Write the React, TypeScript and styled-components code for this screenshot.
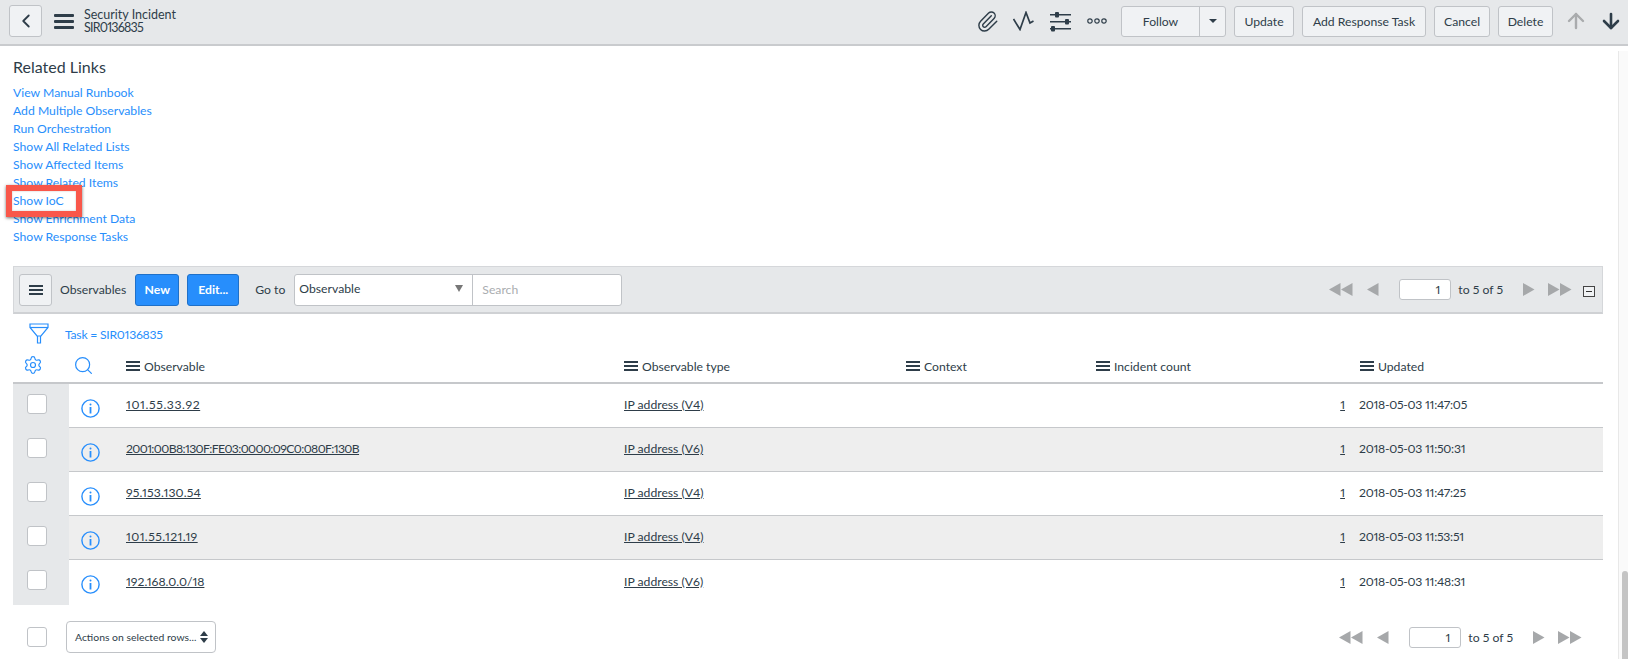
import React from 'react';
import styled, { createGlobalStyle } from 'styled-components';
import { Paperclip, ChevronLeft, ArrowUp, ArrowDown, Search as SearchIcon, Settings } from 'lucide-react';

const Global = createGlobalStyle`
  html, body { margin: 0; padding: 0; height: 659px; overflow: hidden; background: #fff; }
  body { font-family: Lato, "Noto Sans", sans-serif; font-size: 12.2px; color: #2e3d49; font-variant-numeric: proportional-nums; }
  * { box-sizing: border-box; }
`;

const Page = styled.div`display: flex; flex-direction: column; width: 1628px; height: 659px; overflow: hidden;`;
const Header = styled.header`
  flex: none; height: 46px; background: #e6e8ea; border-bottom: 2px solid #c9cbce;
  display: flex; align-items: center; padding: 0 5px 2px 9px;
`;
const Body = styled.div`flex: 1; display: flex; min-height: 0;`;
const Main = styled.main`flex: 1; min-width: 0; padding: 11px 15px 0 13px;`;
const Track = styled.div`
  flex: none; width: 10px; margin-top: 5px; border-left: 1px solid #e8e8e8; background: #fafafa;
  display: flex; flex-direction: column; justify-content: flex-end; padding-left: 3px;
`;
const Thumb = styled.div`width: 6px; height: 88px; background: #c4c4c4; border-radius: 3px 3px 0 0;`;

const BaseButton = styled.button`
  font: inherit; font-size: 12.2px; color: #2e3d49; background: #f0f2f4; border: 1px solid #c0c3c7;
  border-radius: 3px; height: 31px; padding: 0; display: inline-flex; align-items: center; justify-content: center;
`;
const BackButton = styled(BaseButton)`width: 33px; height: 32px;`;
const TitleBlock = styled.div`margin-left: 10px; font-size: 12.5px; line-height: 13.5px;`;
const TitleNumber = styled.div`letter-spacing: -0.8px;`;
const BigBars = styled.svg`margin-left: 12px; flex: none;`;
const Spacer = styled.div`flex: 1;`;
const IconSlot = styled.span<{ $w: number; $gap?: number }>`
  display: inline-flex; align-items: center; justify-content: center; width: ${p => p.$w}px; margin-right: ${p => p.$gap ?? 0}px; color: #2e3d49;
`;
const ActionButton = styled(BaseButton)<{ $w: number; $gap?: number }>`width: ${p => p.$w}px; margin-right: ${p => p.$gap ?? 8}px;`;
const SplitButton = styled.div`
  display: flex; width: 105px; height: 31px; margin-right: 8px; background: #f0f2f4; border: 1px solid #c0c3c7; border-radius: 3px;
`;
const SplitMain = styled.span`flex: 1; display: flex; align-items: center; justify-content: center; border-right: 1px solid #c0c3c7;`;
const SplitCaret = styled.span`width: 25px; display: flex; align-items: center; justify-content: center;`;
const Caret = styled.i`width: 0; height: 0; border-left: 4px solid transparent; border-right: 4px solid transparent; border-top: 4px solid #2e3d49;`;

const Heading = styled.h2`margin: 0 0 7px; font-size: 16px; font-weight: 400; line-height: 20px;`;
const Links = styled.div`position: relative; display: flex; flex-direction: column; align-items: flex-start; margin-bottom: 20px;`;
const LinkText = styled.a`color: #278efc; font-size: 12.2px; line-height: 18px; text-decoration: none;`;
const Callout = styled.div`
  position: absolute; left: -7px; top: 101px; width: 76px; height: 32px; border: 6px solid #f9574a;
  box-shadow: 0 1px 3px rgba(0,0,0,.55), inset 0 0 2px rgba(0,0,0,.25);
`;

const Toolbar = styled.div`
  height: 48px; background: #e6e8ea; border: 1px solid #d5d7da; border-bottom: 2px solid #cfd1d4;
  display: flex; align-items: center; padding: 0 7px 0 5px;
`;
const MenuButton = styled(BaseButton)`width: 33px; height: 32px;`;
const ToolLabel = styled.span<{ $l: number }>`margin-left: ${p => p.$l}px;`;
const PrimaryButton = styled.button<{ $w: number; $l: number }>`
  font: inherit; font-weight: 700; font-size: 12.2px; color: #fff; background: #278efc; border: 1px solid #1f70c8; border-radius: 3px;
  width: ${p => p.$w}px; height: 32px; margin-left: ${p => p.$l}px; padding: 0;
`;
const SearchGroup = styled.div`
  display: flex; width: 328px; height: 32px; margin-left: 9px; background: #fff; border: 1px solid #c0c3c7; border-radius: 3px;
`;
const SelectPart = styled.div`
  width: 178px; display: flex; align-items: center; justify-content: space-between; padding: 0 9px 2px 4px; border-right: 1px solid #c0c3c7;
`;
const Tri = styled.i`
  width: 0; height: 0; border-left: 4px solid transparent; border-right: 4px solid transparent; border-top: 7px solid #777;
`;
const SearchPart = styled.span`flex: 1; display: flex; align-items: center; padding-left: 9px; color: #aaadb0;`;

const Pager = styled.div<{ $mr: number }>`display: flex; align-items: center; margin-left: auto; margin-right: ${p => p.$mr}px;`;
const PageInput = styled.div`
  width: 52px; height: 21px; margin: 0 7px 0 20px; padding-right: 10px; background: #fff; border: 1px solid #c0c3c7; border-radius: 3px;
  display: flex; align-items: center; justify-content: flex-end;
`;
const PagerGap = styled.span<{ $l: number }>`display: inline-flex; margin-left: ${p => p.$l}px;`;
const Collapse = styled.span`
  width: 12px; height: 11px; margin-left: 11px; margin-top: 3px; border: 1px solid #444; background: #f0f2f4; display: flex; align-items: center; justify-content: center;
  &::after { content: ''; width: 6px; height: 1px; background: #333; }
`;

const FilterRow = styled.div`height: 40px; display: flex; align-items: center; padding: 0 0 2px 16px;`;
const FilterText = styled.a`color: #278efc; margin-left: 16px; font-size: 12.2px; padding-top: 3px; letter-spacing: -0.25px;`;

const cols = '56px 57px 498px 282px 190px 257px 1fr';
const HeadRow = styled.div`
  display: grid; grid-template-columns: ${cols}; height: 30px; align-items: center; border-bottom: 2px solid #c6c8cb;
`;
const HeadCell = styled.div<{ $pl?: number }>`display: flex; align-items: center; gap: 4px; padding-bottom: 4px; padding-left: ${p => p.$pl ?? 0}px;`;
const IconCell = styled.div<{ $pl: number }>`padding-left: ${p => p.$pl}px; display: flex; padding-bottom: 6px; color: #278efc;`;
const Row = styled.div<{ $alt: boolean; $last: boolean }>`
  display: grid; grid-template-columns: ${cols}; height: 44px; align-items: center;
  background: ${p => (p.$alt ? '#eeeeee' : '#fff')};
  border-bottom: ${p => (p.$last ? 'none' : '1px solid #c6c8cb')};
`;
const CheckCell = styled.div`align-self: stretch; background: #e6e8ea; display: flex; align-items: center; padding-left: 14px; padding-bottom: 5px; margin-bottom: -1px;`;
const Check = styled.span`display: block; width: 20px; height: 20px; background: #fff; border: 1px solid #c0c3c7; border-radius: 3px;`;
const InfoCell = styled.div`padding-left: 12px; padding-top: 5px; display: flex; color: #278efc;`;
const RowLink = styled.a<{ $spacing?: number }>`
  text-decoration: underline; color: #2e3d49; justify-self: start; padding-bottom: 2px; letter-spacing: ${p => p.$spacing ?? 0}px;
`;
const CountCell = styled(RowLink)`justify-self: end; margin-right: 8px;`;
const DateCell = styled.span`padding-left: 6px; padding-bottom: 2px; letter-spacing: -0.25px;`;

const Footer = styled.div`display: flex; align-items: center; height: 32px; margin-top: 17px; padding-left: 14px;`;
const ActionSelect = styled.div`
  width: 150px; height: 32px; margin-left: 19px; padding: 0 7px 0 8px; background: #fff; border: 1px solid #c0c3c7; border-radius: 4px;
  display: flex; align-items: center; justify-content: space-between; font-size: 10.4px; white-space: nowrap;
`;

const BarsSmall = () => (
  <svg width="14" height="10" viewBox="0 0 14 10" fill="#2e3d49"><rect y="0" width="14" height="2" /><rect y="4" width="14" height="2" /><rect y="8" width="14" height="2" /></svg>
);
const Tris = ({ dir, n }: { dir: 'l' | 'r'; n: number }) => {
  const w = n * 12;
  const shapes = Array.from({ length: n }, (_, i) => i * 12);
  return (
    <svg width={w} height="13" viewBox={`0 0 ${w} 13`} fill="#a6a8aa">
      {shapes.map(x => <polygon key={x} points={dir === 'l' ? `${x},6.5 ${x + 11.5},0 ${x + 11.5},13` : `${x},0 ${x + 11.5},6.5 ${x},13`} />)}
    </svg>
  );
};
const Info = () => (
  <svg width="19" height="19" viewBox="0 0 19 19" fill="none" stroke="#278efc" strokeWidth="1.4">
    <circle cx="9.5" cy="9.5" r="8.6" />
    <circle cx="9.5" cy="5.6" r="1" fill="#278efc" stroke="none" />
    <path d="M9.5 8v6.5" strokeWidth="1.8" />
  </svg>
);
const PagerBlock = ({ mr, collapse }: { mr: number; collapse?: boolean }) => (
  <Pager $mr={mr}>
    <Tris dir="l" n={2} />
    <PagerGap $l={14}><Tris dir="l" n={1} /></PagerGap>
    <PageInput>1</PageInput>
    <span>to 5 of 5</span>
    <PagerGap $l={20}><Tris dir="r" n={1} /></PagerGap>
    <PagerGap $l={13}><Tris dir="r" n={2} /></PagerGap>
    {collapse && <Collapse />}
  </Pager>
);

const links = ['View Manual Runbook', 'Add Multiple Observables', 'Run Orchestration', 'Show All Related Lists', 'Show Affected Items', 'Show Related Items', 'Show IoC', 'Show Enrichment Data', 'Show Response Tasks'];
const rows: { name: string; spacing: number; type: string; date: string }[] = [
  { name: '101.55.33.92', spacing: 0.6, type: 'IP address (V4)', date: '2018-05-03 11:47:05' },
  { name: '2001:00B8:130F:FE03:0000:09C0:080F:130B', spacing: -0.6, type: 'IP address (V6)', date: '2018-05-03 11:50:31' },
  { name: '95.153.130.54', spacing: 0.15, type: 'IP address (V4)', date: '2018-05-03 11:47:25' },
  { name: '101.55.121.19', spacing: 0.4, type: 'IP address (V4)', date: '2018-05-03 11:53:51' },
  { name: '192.168.0.0/18', spacing: 0, type: 'IP address (V6)', date: '2018-05-03 11:48:31' },
];

export default function App() {
  return (
    <Page>
      <Global />
      <Header>
        <BackButton><ChevronLeft size={22} strokeWidth={2} /></BackButton>
        <BigBars width="20" height="15" viewBox="0 0 20 15" fill="#2e3d49"><rect width="20" height="3" rx="1" /><rect y="6" width="20" height="3" rx="1" /><rect y="12" width="20" height="3" rx="1" /></BigBars>
        <TitleBlock><div>Security Incident</div><TitleNumber>SIR0136835</TitleNumber></TitleBlock>
        <Spacer />
        <IconSlot $w={24} $gap={14}><Paperclip size={23} strokeWidth={1.5} /></IconSlot>
        <IconSlot $w={21} $gap={16}>
          <svg width="21" height="20" viewBox="0 0 21 20" fill="none" stroke="#2e3d49" strokeWidth="1.7"><path d="M0.5 8L7 18.5 13 1.5 17 12 20.5 10" /></svg>
        </IconSlot>
        <IconSlot $w={21} $gap={16}>
          <svg width="21" height="21" viewBox="0 0 21 21" fill="#2e3d49"><rect y="3" width="21" height="1.5" /><rect y="10" width="21" height="1.5" /><rect y="17" width="21" height="1.5" /><rect x="5" y="1" width="4" height="5.5" rx="1" /><rect x="15" y="8" width="4" height="5.5" rx="1" /><rect x="1" y="15" width="4" height="5.5" rx="1" /></svg>
        </IconSlot>
        <IconSlot $w={20} $gap={14}>
          <svg width="20" height="6" viewBox="0 0 20 6" fill="none" stroke="#2e3d49" strokeWidth="1.2"><circle cx="3" cy="3" r="2.2" /><circle cx="10" cy="3" r="2.2" /><circle cx="17" cy="3" r="2.2" /></svg>
        </IconSlot>
        <SplitButton><SplitMain>Follow</SplitMain><SplitCaret><Caret /></SplitCaret></SplitButton>
        <ActionButton $w={60}>Update</ActionButton>
        <ActionButton $w={124}>Add Response Task</ActionButton>
        <ActionButton $w={56}>Cancel</ActionButton>
        <ActionButton $w={55} $gap={11}>Delete</ActionButton>
        <IconSlot $w={24} $gap={11}><ArrowUp size={26} strokeWidth={2.4} color="#a9abad" /></IconSlot>
        <IconSlot $w={24}><ArrowDown size={26} strokeWidth={2.6} /></IconSlot>
      </Header>
      <Body>
        <Main>
          <Heading>Related Links</Heading>
          <Links>
            {links.map(l => <LinkText key={l}>{l}</LinkText>)}
            <Callout />
          </Links>
          <Toolbar>
            <MenuButton><BarsSmall /></MenuButton>
            <ToolLabel $l={8}>Observables</ToolLabel>
            <PrimaryButton $w={44} $l={9}>New</PrimaryButton>
            <PrimaryButton $w={52} $l={8}>Edit...</PrimaryButton>
            <ToolLabel $l={16}>Go to</ToolLabel>
            <SearchGroup>
              <SelectPart>Observable<Tri /></SelectPart>
              <SearchPart>Search</SearchPart>
            </SearchGroup>
            <PagerBlock mr={0} collapse />
          </Toolbar>
          <FilterRow>
            <svg width="20" height="21" viewBox="0 0 20 21" fill="none" stroke="#278efc" strokeWidth="1.2"><path d="M1 1h18v3.5L12 13H8L1 4.5z" /><path d="M1 4.5h18" /><path d="M8.5 13v7h3v-7" /></svg>
            <FilterText>Task = SIR0136835</FilterText>
          </FilterRow>
          <HeadRow>
            <IconCell $pl={10}><Settings size={20} strokeWidth={1.4} /></IconCell>
            <IconCell $pl={4}><SearchIcon size={21} strokeWidth={1.4} /></IconCell>
            <HeadCell><BarsSmall />Observable</HeadCell>
            <HeadCell><BarsSmall />Observable type</HeadCell>
            <HeadCell><BarsSmall />Context</HeadCell>
            <HeadCell><BarsSmall />Incident count</HeadCell>
            <HeadCell $pl={7}><BarsSmall />Updated</HeadCell>
          </HeadRow>
          {rows.map((r, i) => (
            <Row key={r.name} $alt={i % 2 === 1} $last={i === rows.length - 1}>
              <CheckCell><Check /></CheckCell>
              <InfoCell><Info /></InfoCell>
              <RowLink $spacing={r.spacing}>{r.name}</RowLink>
              <RowLink>{r.type}</RowLink>
              <span />
              <CountCell>1</CountCell>
              <DateCell>{r.date}</DateCell>
            </Row>
          ))}
          <Footer>
            <Check />
            <ActionSelect>
              <span>Actions on selected rows...</span>
              <svg width="8" height="14" viewBox="0 0 8 14" fill="#2e3d49"><polygon points="4,1 8,6 0,6" /><polygon points="0,8 8,8 4,13" /></svg>
            </ActionSelect>
            <PagerBlock mr={21} />
          </Footer>
        </Main>
        <Track><Thumb /></Track>
      </Body>
    </Page>
  );
}
